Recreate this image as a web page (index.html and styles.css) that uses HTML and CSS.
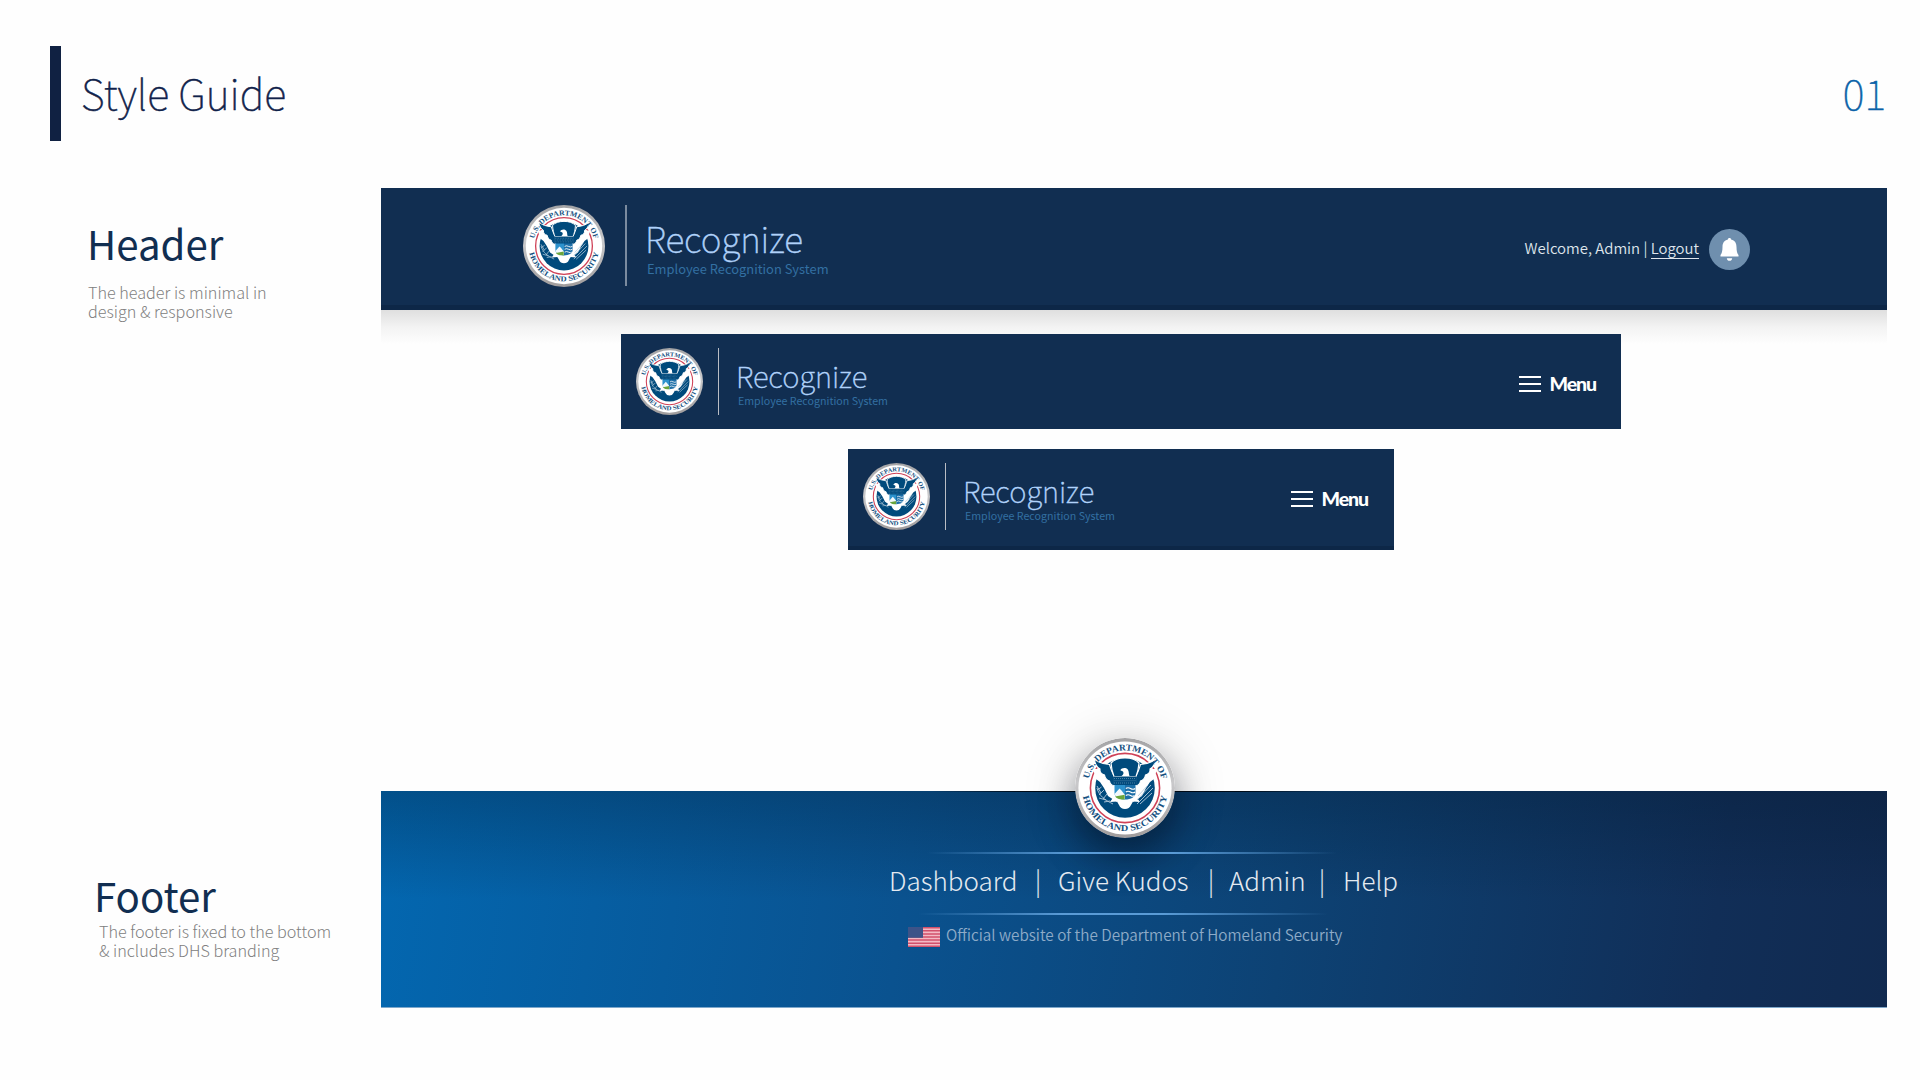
FILE: index.html
```html
<!DOCTYPE html>
<html lang="en">
<head>
<meta charset="utf-8">
<title>Style Guide</title>
<link rel="stylesheet" href="styles.css">
</head>
<body>
<svg class="defs" width="0" height="0" aria-hidden="true">
  <defs>
    <linearGradient id="rim" x1="0" y1="0" x2="0" y2="1">
      <stop offset="0" stop-color="#a3a3a5"/><stop offset=".45" stop-color="#c9c9cb"/><stop offset="1" stop-color="#a09c9c"/>
    </linearGradient>
    <path id="arcTop" d="M12.500 50A37.500 37.500 0 0 1 87.500 50"/>
    <path id="arcBottom" d="M7 50A43 43 0 0 0 93 50"/>
    <symbol id="seal" viewBox="0 0 100 100">
      <circle cx="50" cy="50" r="50" fill="url(#rim)"/>
      <circle cx="50" cy="50" r="46.6" fill="#fff"/>
      <circle cx="50" cy="50" r="34.6" fill="none" stroke="#cf4257" stroke-width="1.600"/>
      <circle cx="50" cy="50" r="29.800" fill="#004a7c"/>
      <!-- white bands under the wings -->
      <path fill="#fff" d="M18 31L26 31L41 48L42 64L33 58L29 50L25 44L21 41ZM82 31L74 31L59 48L58 64L67 58L71 50L75 44L79 41Z"/>
      <!-- wings -->
      <path fill="#004a7c" stroke="#fff" stroke-width="1.200" d="M19.500 21C23 24.500 29 26 34.500 26.500C36 31 37 35 39.500 38V48C36.500 47.500 35 46 34.500 43C31.500 42 30 40 29.500 37C26 36 24.500 34 25 31C22 29.500 19.500 25 19.500 21ZM80.500 21C77 24.500 71 26 65.500 26.500C64 31 63 35 60.500 38V48C63.500 47.500 65 46 65.500 43C68.500 42 70 40 70.500 37C74 36 75.500 34 75 31C78 29.500 80.500 25 80.500 21Z"/>
      <!-- breast and head -->
      <path fill="#004a7c" stroke="#fff" stroke-width="1.200" d="M36 25C39 21.500 44 20 50 20S61 21.500 64 25C63.500 31 62.500 35 61 38.500H39C37.500 35 36.500 31 36 25Z"/>
      <path fill="#fff" d="M45.300 32.300C46.500 29.800 50.500 29 52.800 31.500C54.300 33.800 53.500 35.500 54.500 38H46.500C48.500 36.500 49 35 48 33.500Z"/>
      <!-- tail, branch and arrows -->
      <path fill="#fff" d="M40 57L35 64L42 63.500L44 67A6.500 6.500 0 0 0 56 67L58 63.500L65 64L60 57Z"/>
      <g stroke="#b4cbdc" stroke-width=".9" fill="none">
        <path d="M22 50C24 58 30 62 38 66M22.500 52L26.500 49M24 57L29 52M28 61L32 56M22 48L26 55M24 60L31 62M29 64L35 63"/>
        <path d="M78 50L62 66M76 47L62 62M73 47L63 58M77 55L65 66"/>
      </g>
      <!-- shield -->
      <path fill="#004a7c" d="M38.500 38.500H61.500V47H38.500Z"/>
      <path stroke="#7ba2bf" stroke-width=".6" stroke-dasharray="1 1" d="M39 40.500H61M39.500 42.700H61M39 45H61"/>
      <path fill="#2d92cd" d="M39.500 47H50V61.500C44 61.500 39.500 59 39.500 55Z"/>
      <path fill="#f2f8fc" d="M39.500 56L44.500 50.500L46.500 52.500L50 57V61H45C42 60 40 58.500 39.500 55Z"/>
      <path fill="#6aa53c" d="M40 58.500L49.700 56.800V61.500C45 61.500 42 61 40 58.500Z"/>
      <path fill="#1d6fa8" d="M50 47H60.500V55C60.500 59 56 61.500 50 61.500Z"/>
      <path fill="none" stroke="#fff" stroke-width="1.100" d="M50.800 50.500Q53 49 55.500 50.500T60.200 50.500M50.800 54Q53 52.500 55.500 54T60.200 54M50.800 57.500Q53 56 55.500 57.500T59.500 57.500"/>
      <g class="seal-text">
        <text><textPath href="#arcTop" startOffset="9" textLength="100" lengthAdjust="spacingAndGlyphs">U.S. DEPARTMENT OF</textPath></text>
        <text><textPath href="#arcBottom" startOffset="8.500" textLength="118" lengthAdjust="spacingAndGlyphs">HOMELAND SECURITY</textPath></text>
      </g>
    </symbol>
  </defs>
</svg>

<div class="page">
  <header class="title-bar">
    <span class="accent"></span>
    <h1>Style Guide</h1>
    <span class="page-no">01</span>
  </header>

  <main class="guide">
    <aside class="notes">
      <section class="note note-header">
        <h2>Header</h2>
        <p>The header is minimal in<br>design &amp; responsive</p>
      </section>
      <section class="note note-footer">
        <h2>Footer</h2>
        <p>The footer is fixed to the bottom<br>&amp; includes DHS branding</p>
      </section>
    </aside>

    <div class="stage">
      <div class="bar bar-wide">
        <svg class="seal"><use href="#seal"/></svg>
        <span class="rule"></span>
        <div class="brand"><span class="name">Recognize</span><span class="tag">Employee Recognition System</span></div>
        <div class="user"><span>Welcome, Admin |</span> <a>Logout</a></div>
        <svg class="bell" viewBox="0 0 41 41"><circle cx="20.500" cy="20.500" r="20.500" fill="#6f8fae"/><path fill="#fff" d="M20.500 9c-1 0-1.600.700-1.600 1.600-3.800.900-5.400 3.600-5.400 7.400 0 4.300-.700 6.500-2 8v1.500h18v-1.500c-1.300-1.500-2-3.700-2-8 0-3.800-1.600-6.500-5.400-7.400 0-.900-.600-1.600-1.600-1.600zM17.800 29.200h5.400c-.300 1.800-1.300 2.600-2.700 2.600s-2.400-.800-2.700-2.600z"/></svg>
      </div>
      <div class="drop"></div>
      <div class="bar bar-mid">
        <svg class="seal"><use href="#seal"/></svg>
        <span class="rule"></span>
        <div class="brand"><span class="name">Recognize</span><span class="tag">Employee Recognition System</span></div>
        <div class="menu"><span class="lines"><i></i><i></i><i></i></span><b>Menu</b></div>
      </div>
      <div class="bar bar-small">
        <svg class="seal"><use href="#seal"/></svg>
        <span class="rule"></span>
        <div class="brand"><span class="name">Recognize</span><span class="tag">Employee Recognition System</span></div>
        <div class="menu"><span class="lines"><i></i><i></i><i></i></span><b>Menu</b></div>
      </div>

      <footer class="foot">
        <svg class="foot-seal"><use href="#seal"/></svg>
        <span class="glow"></span>
        <nav><a>Dashboard</a><i>|</i><a>Give Kudos</a><i>|</i><a>Admin</a><i>|</i><a>Help</a></nav>
        <span class="glow glow-low"></span>
        <div class="official">
          <svg class="flag" viewBox="0 0 32 20"><rect width="32" height="20" fill="#f3b9c4"/><path stroke="#d2506b" stroke-width="1.540" d="M0 .77H32M0 3.850H32M0 6.920H32M0 10H32M0 13.080H32M0 16.150H32M0 19.230H32"/><rect width="15" height="10.800" fill="#3d5388"/></svg>
          <span>Official website of the Department of Homeland Security</span>
        </div>
      </footer>
    </div>
  </main>
</div>
</body>
</html>
```
FILE: styles.css
```css
* { box-sizing: border-box; margin: 0; padding: 0; }
body { background: #fefefe; font-family: "Noto Sans CJK SC", "Noto Sans", sans-serif; font-weight: 300; }
.defs { position: absolute; }
.page { width: 1920px; height: 1080px; overflow: hidden; padding-top: 46px; }

.title-bar { display: flex; height: 95px; padding: 0 34px 0 50px; color: #10224a; }
.accent { width: 11px; height: 95px; background: #102142; margin-right: 20px; }
h1, .page-no { font-size: 41.400px; font-weight: 100; line-height: 92px; white-space: nowrap; -webkit-text-stroke: .5px currentColor; }
.page-no { margin-left: auto; color: #0a62a8; }

.guide { display: flex; margin-top: 47px; }
.notes { width: 381px; padding: 23px 0 0 87px; }
.note h2 { font-size: 40.200px; font-weight: 400; line-height: 64px; color: #112e51; white-space: nowrap; }
.note p { font-size: 16.200px; line-height: 19px; color: #808080; white-space: nowrap; }
.note-header p { margin-top: 8px; padding-left: 1px; }
.note-footer { margin-top: 542px; padding-left: 7px; }
.note-footer p { padding-left: 5px; margin-top: -5px; }

.stage { width: 1506px; display: flex; flex-direction: column; align-items: flex-start; }
.bar { display: flex; background: #112e51; color: #dfe5ec; }
.seal { display: block; flex: none; }
.rule { flex: none; background: #b9bdc4; }
.brand { display: flex; flex-direction: column; white-space: nowrap; }
.name { color: #b0d2fa; font-weight: 100; -webkit-text-stroke: .5px currentColor; }
.tag { color: #3370a2; font-weight: 400; }
.seal-text text { font: 700 9px "Liberation Serif", serif; fill: #14507f; }

.bar-wide { width: 1506px; height: 122px; padding: 17px 137px 0 142px; border-bottom: 5px solid #0d2747; }
.bar-wide .seal { width: 82px; height: 82px; }
.bar-wide .rule { width: 2px; height: 81px; margin: 0 18px 0 20px; background: #7b8b9f; }
.bar-wide .name { font-size: 35.300px; line-height: 40px; margin-top: 13px; }
.bar-wide .tag { font-size: 12.900px; line-height: 16px; margin: 3px 0 0 2px; }
.user { margin-left: auto; font-size: 14.900px; font-weight: 350; line-height: 24px; padding-top: 31px; white-space: nowrap; }
.user a { border-bottom: 1px solid #dfe5ec; display: inline-block; line-height: 20px; }
.bell { width: 41px; height: 41px; margin: 24px 0 0 10px; }
.drop { width: 1506px; height: 24px; overflow: visible; }
.drop::before { content: ""; display: block; width: 100%; height: 34px; background: linear-gradient(#dfdfdf, #f3f3f3 50%, #fefefe); }

.bar-mid { position: relative; width: 1000px; height: 95px; margin-left: 240px; padding: 14px 25px 0 15px; }
.bar-small { width: 546px; height: 101px; margin: 20px 0 0 467px; padding: 14px 26px 0 15px; border-bottom: 4px solid #0d2747; }
.bar-mid .seal, .bar-small .seal { width: 67px; height: 67px; }
.bar-mid .rule, .bar-small .rule { width: 1px; height: 67px; margin: 0 17px 0 15px; }
.bar-mid .name, .bar-small .name { font-size: 29.300px; line-height: 34px; margin-top: 10px; }
.bar-mid .tag, .bar-small .tag { font-size: 10.650px; line-height: 14px; margin: 2px 0 0 2px; }
.menu { display: flex; margin-left: auto; color: #fff; }
.lines { display: flex; flex-direction: column; gap: 5px; padding-top: 28px; margin-right: 9px; }
.lines i { display: block; width: 22px; height: 2px; background: #fff; }
.menu b { font: 900 19.500px/24px Lato, sans-serif; letter-spacing: -1.100px; padding-top: 24px; }

.foot { width: 1506px; height: 217px; margin-top: 241px; display: flex; flex-direction: column; align-items: flex-start; border-bottom: 1px solid #7fa8cb;
  background: linear-gradient(90deg, transparent 550px, #000c18 640px, #000c18 860px, transparent 950px) 0 0 / 100% 1px no-repeat,
    linear-gradient(rgba(0,20,40,.28), rgba(0,20,40,0) 50%),
    linear-gradient(98deg, #0367b0 0%, #0a528f 35%, #0d4274 60%, #112e57 88%, #112a50 100%); }
.foot-seal { width: 100px; height: 100px; margin: -53px 0 0 694px; border-radius: 50%; box-shadow: 0 6px 56px rgba(0,0,0,.2), 0 20px 36px rgba(0,10,25,.4); }
.glow { width: 410px; height: 2px; margin: 14px 0 0 546px; background: linear-gradient(90deg, rgba(90,155,214,0), #5a9bd6 35%, #5a9bd6 60%, rgba(90,155,214,0)); }
.glow-low { margin: 0 0 0 537px; }
nav { display: grid; grid-template-columns: 129px 40px 135px 36px 72px 42px 80px; height: 59px; margin-left: 508px; font-size: 26px; line-height: 51px; color: #e4eaf1; white-space: nowrap; }
nav i { font-style: normal; text-align: center; }
.official { display: flex; margin: 12px 0 0 527px; font-size: 15.270px; font-weight: 350; line-height: 22px; color: #8eabc8; white-space: nowrap; }
.official span { margin-top: -4px; }
.flag { width: 32px; height: 20px; margin: 0 6px 0 0; }
```
